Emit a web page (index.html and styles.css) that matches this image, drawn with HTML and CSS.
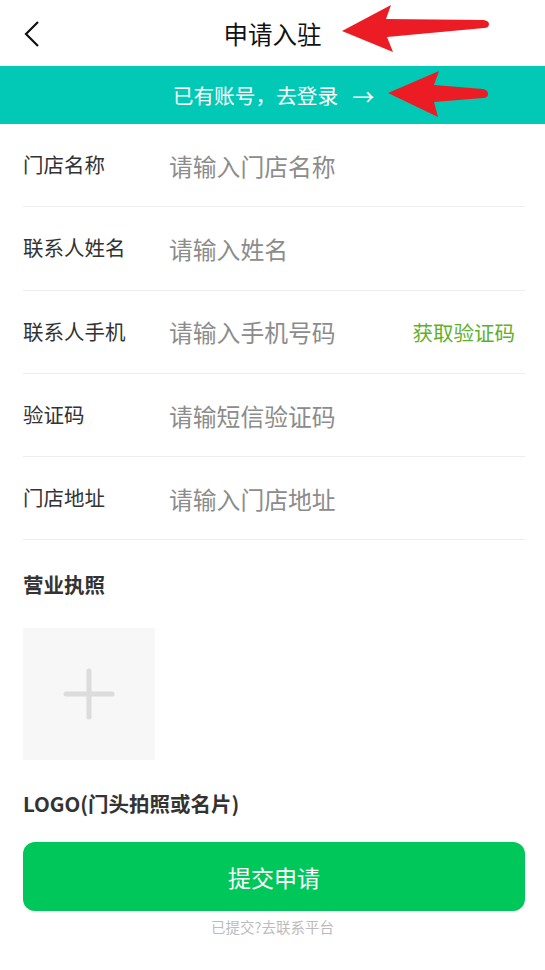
FILE: index.html
```html
<!doctype html>
<html>
  <head>
    <meta charset="utf-8" />
    <title>申请入驻</title>
    <link rel="stylesheet" href="styles.css">
  </head>
  <body>
    <div class="page">
      <header class="nav">
        <a class="nav-back" href="#">
          <svg width="16" height="26" viewBox="0 0 16 26">
            <polyline points="14,1 2,13 14,25" fill="none" stroke="#111" stroke-width="2.2" />
          </svg>
        </a>
        <h1 class="nav-title">申请入驻</h1>
        <span></span>
      </header>

      <a class="login-bar" href="#">已有账号，去登录<span class="login-arrow">→</span></a>

      <form class="form">
        <div class="row">
          <label class="row-label">门店名称</label>
          <input class="row-input" type="text" placeholder="请输入门店名称" />
        </div>
        <div class="row">
          <label class="row-label">联系人姓名</label>
          <input class="row-input" type="text" placeholder="请输入姓名" />
        </div>
        <div class="row">
          <label class="row-label">联系人手机</label>
          <input class="row-input" type="text" placeholder="请输入手机号码" />
          <span class="get-code">获取验证码</span>
        </div>
        <div class="row">
          <label class="row-label">验证码</label>
          <input class="row-input" type="text" placeholder="请输短信验证码" />
        </div>
        <div class="row">
          <label class="row-label">门店地址</label>
          <input class="row-input" type="text" placeholder="请输入门店地址" />
        </div>

        <div class="section-title">营业执照</div>
        <div class="upload">
          <svg width="52" height="52" viewBox="0 0 52 52">
            <line x1="26" y1="3" x2="26" y2="49" stroke="#dcdcdc" stroke-width="5" stroke-linecap="round" />
            <line x1="3" y1="26" x2="49" y2="26" stroke="#dcdcdc" stroke-width="5" stroke-linecap="round" />
          </svg>
        </div>

        <div class="section-title logo-title">LOGO(门头拍照或名片)</div>

        <button class="submit" type="button">提交申请</button>
        <p class="hint">已提交?去联系平台</p>
      </form>

      <!-- annotation arrows drawn over the screenshot -->
      <svg class="marks" width="545" height="130" viewBox="0 0 545 130">
        <path d="M342,31 L391,5 L386,19 L484,20 Q489,21 489,24 Q489,28 484,28 L387,37 L393,52 Z" fill="#ec1c24" />
        <path d="M388,93 L439,71 L434,85 L483,89 Q488,90 488,94 Q488,98 483,98 L434,102 L438,117 Z" fill="#ec1c24" />
      </svg>
    </div>
  </body>
</html>
```

FILE: styles.css
```css
body {
  margin: 0;
  background: #fff;
  font-family: "Noto Sans CJK SC", "Noto Sans", sans-serif;
  color: #333;
}
.page {
  position: relative;
  width: 545px;
  min-height: 970px;
}
.nav {
  height: 66px;
  display: grid;
  grid-template-columns: 70px 1fr 70px;
  align-items: center;
}
.nav-back {
  display: flex;
  padding-left: 24px;
  padding-top: 2px;
}
.nav-title {
  margin: 0;
  text-align: center;
  font-size: 24.5px;
  font-weight: normal;
  color: #111;
}
.login-bar {
  height: 58px;
  display: flex;
  align-items: center;
  justify-content: center;
  background: #02c9b5;
  color: #fff;
  font-size: 20.7px;
  text-decoration: none;
  padding-left: 2px;
}
.login-arrow {
  margin-left: 14px;
  font-size: 22px;
}
.form {
  margin: 0;
}
.row {
  box-sizing: border-box;
  height: 83.3px;
  margin: 0 20px 0 23px;
  display: flex;
  align-items: center;
  border-bottom: 1px solid #eee;
}
.row-label {
  width: 146px;
  flex-shrink: 0;
  font-size: 20.5px;
  color: #333;
  margin-top: -2px;
}
.row-input {
  flex: 1;
  min-width: 0;
  border: none;
  outline: none;
  padding: 0;
  font-family: inherit;
  font-size: 23.8px;
  color: #333;
  background: transparent;
}
.row-input::placeholder {
  color: #8c8c8c;
}
.get-code {
  font-size: 20.5px;
  color: #5fb02a;
  padding-right: 10px;
}
.section-title {
  margin: 30px 23px 0;
  font-size: 20.5px;
  line-height: 28px;
  font-weight: bold;
  color: #333;
}
.upload {
  width: 132px;
  height: 132px;
  margin: 30px 0 0 23px;
  background: #f7f7f7;
  display: flex;
  align-items: center;
  justify-content: center;
}
.logo-title {
  margin-top: 29px;
}
.submit {
  display: block;
  box-sizing: border-box;
  width: 502px;
  height: 69px;
  margin: 25px 0 0 23px;
  border: none;
  border-radius: 12px;
  background: #00c759;
  color: #fff;
  font-family: inherit;
  font-size: 23px;
}
.hint {
  margin: 6px 0 0;
  text-align: center;
  font-size: 14.5px;
  line-height: 20px;
  color: #bcbcbc;
}
.marks {
  position: absolute;
  top: 0;
  left: 0;
  pointer-events: none;
}
```
